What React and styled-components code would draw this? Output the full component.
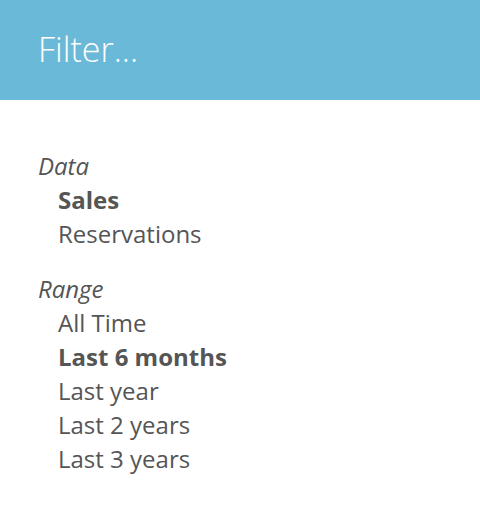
import React from "react";
import styled, { createGlobalStyle } from "styled-components";

const GlobalStyle = createGlobalStyle`
  html, body {
    margin: 0;
    padding: 0;
    background: #fff;
    font-family: "Open Sans", "Liberation Sans", sans-serif;
  }
`;

const sections = [
  { title: "Data", items: ["Sales", "Reservations"], active: "Sales" },
  {
    title: "Range",
    items: ["All Time", "Last 6 months", "Last year", "Last 2 years", "Last 3 years"],
    active: "Last 6 months",
  },
];

const App = () => {
  return (
    <>
      <GlobalStyle />
      <Panel>
        <Header>
          <Title>Filter...</Title>
        </Header>
        <Body>
          {sections.map((s) => (
            <Section key={s.title}>
              <SectionTitle>{s.title}</SectionTitle>
              {s.items.map((item) => (
                <Option key={item} $active={item === s.active}>
                  {item}
                </Option>
              ))}
            </Section>
          ))}
        </Body>
      </Panel>
    </>
  );
};

export default App;

const Panel = styled.div`
  width: 480px;
  height: 528px;
  background: #fff;
`;

const Header = styled.div`
  height: 100px;
  background: #6ab9d8;
  display: flex;
  align-items: center;
  padding-left: 38px;
  padding-bottom: 2px;
  box-sizing: border-box;
`;

const Title = styled.h1`
  margin: 0;
  color: #fff;
  font-size: 34px;
  font-weight: 300;
`;

const Body = styled.div`
  padding: 49px 0 0 38px;
  display: flex;
  flex-direction: column;
  gap: 21px;
`;

const Section = styled.div`
  display: flex;
  flex-direction: column;
`;

const SectionTitle = styled.div`
  font-size: 24px;
  line-height: 34px;
  font-style: italic;
  color: #555;
`;

const Option = styled.div`
  font-size: 24px;
  line-height: 34px;
  padding-left: 20px;
  color: #555;
  font-weight: ${(p) => (p.$active ? 700 : 400)};
  cursor: pointer;
`;
